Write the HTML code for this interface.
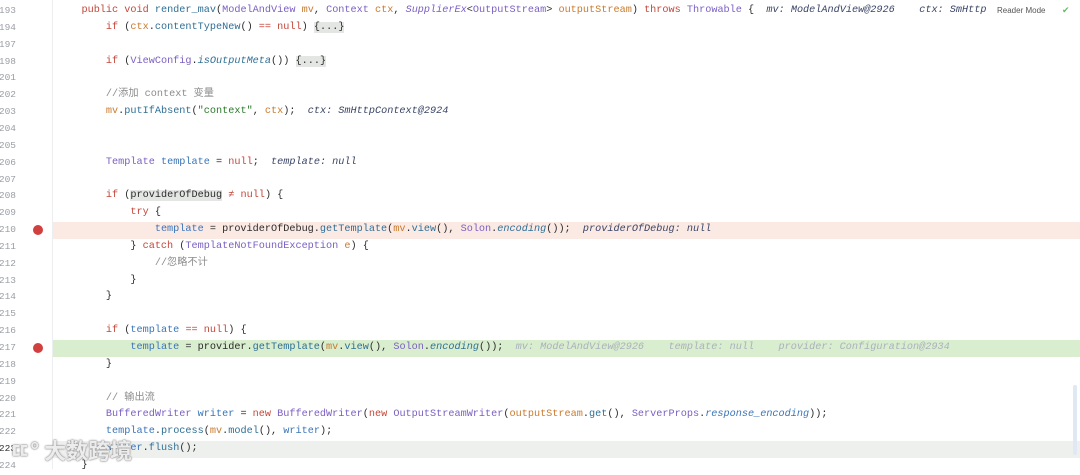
<!DOCTYPE html>
<html><head><meta charset="utf-8"><style>
body{margin:0;width:1080px;height:469px;background:#fff;overflow:hidden;position:relative;font-family:"Liberation Mono","Noto Sans CJK SC",monospace;font-size:10.2px;}
.row{position:absolute;left:0;width:1080px;height:16.85px;line-height:16.85px;white-space:pre;}
.ln{position:absolute;left:-4px;width:20px;text-align:right;color:#9a9ea4;font-size:9.5px;}
.c{position:absolute;left:57px;color:#2b2b2b;}
.k{color:#c4473a}.t{color:#7b5fc2}.f{color:#3a74b8}.m{color:#2f6f95}.p{color:#c97a2e}.i{font-style:italic}
.d{font-style:italic;color:#3a4566}.g{font-style:italic;color:#a9b2bd}.cm{color:#8c8c8c}.s{color:#2b7a2b}
.fold{background:#e4e6e4;}
.bp{position:absolute;left:33px;top:3px;width:10px;height:10px;border-radius:50%;background:#d23f3f;}
</style></head><body>
<div style="position:absolute;left:52px;top:0;width:1px;height:469px;background:#eceef0"></div>
<div class="row" style="top:3px"><span class="ln">193</span><span class="c">    <span class="k">public void</span> <span class="m">render_mav</span>(<span class="t">ModelAndView</span> <span class="p">mv</span>, <span class="t">Context</span> <span class="p">ctx</span>, <span class="t i">SupplierEx</span>&lt;<span class="t">OutputStream</span>&gt; <span class="p">outputStream</span>) <span class="k">throws</span> <span class="t">Throwable</span> {  <span class="d">mv: ModelAndView@2926    ctx: SmHttp</span></span><span style="position:absolute;left:997px;font-family:'Liberation Sans';font-size:8px;color:#555">Reader Mode</span><span style="position:absolute;left:1062px;color:#6b6;font-size:9px">✔</span></div>
<div class="row" style="top:19.85px"><span class="ln">194</span><span class="c">        <span class="k">if</span> (<span class="p">ctx</span>.<span class="m">contentTypeNew</span>() <span class="k">==</span> <span class="k">null</span>) <span class="fold">{...}</span></span></div>
<div class="row" style="top:36.7px"><span class="ln">197</span></div>
<div class="row" style="top:53.55px"><span class="ln">198</span><span class="c">        <span class="k">if</span> (<span class="t">ViewConfig</span>.<span class="m i">isOutputMeta</span>()) <span class="fold">{...}</span></span></div>
<div class="row" style="top:70.4px"><span class="ln">201</span></div>
<div class="row" style="top:87.25px"><span class="ln">202</span><span class="c">        <span class="cm">//添加 context 变量</span></span></div>
<div class="row" style="top:104.1px"><span class="ln">203</span><span class="c">        <span class="p">mv</span>.<span class="m">putIfAbsent</span>(<span class="s">"context"</span>, <span class="p">ctx</span>);  <span class="d">ctx: SmHttpContext@2924</span></span></div>
<div class="row" style="top:120.95px"><span class="ln">204</span></div>
<div class="row" style="top:137.8px"><span class="ln">205</span></div>
<div class="row" style="top:154.65px"><span class="ln">206</span><span class="c">        <span class="t">Template</span> <span class="f">template</span> = <span class="k">null</span>;  <span class="d">template: null</span></span></div>
<div class="row" style="top:171.5px"><span class="ln">207</span></div>
<div class="row" style="top:188.35px"><span class="ln">208</span><span class="c">        <span class="k">if</span> (<span class="fold">providerOfDebug</span> <span class="k">≠</span> <span class="k">null</span>) {</span></div>
<div class="row" style="top:205.2px"><span class="ln">209</span><span class="c">            <span class="k">try</span> {</span></div>
<div class="row" style="top:222.05px"><span class="ln">210</span><span class="bp"></span><div style="position:absolute;left:53px;top:0;right:0;height:100%;background:#fbe9e4"></div><span class="c">                <span class="f">template</span> = providerOfDebug.<span class="m">getTemplate</span>(<span class="p">mv</span>.<span class="m">view</span>(), <span class="t">Solon</span>.<span class="m i">encoding</span>());  <span class="d">providerOfDebug: null</span></span></div>
<div class="row" style="top:238.9px"><span class="ln">211</span><span class="c">            } <span class="k">catch</span> (<span class="t">TemplateNotFoundException</span> <span class="p">e</span>) {</span></div>
<div class="row" style="top:255.75px"><span class="ln">212</span><span class="c">                <span class="cm">//忽略不计</span></span></div>
<div class="row" style="top:272.6px"><span class="ln">213</span><span class="c">            }</span></div>
<div class="row" style="top:289.45px"><span class="ln">214</span><span class="c">        }</span></div>
<div class="row" style="top:306.3px"><span class="ln">215</span></div>
<div class="row" style="top:323.15px"><span class="ln">216</span><span class="c">        <span class="k">if</span> (<span class="f">template</span> <span class="k">==</span> <span class="k">null</span>) {</span></div>
<div class="row" style="top:340px"><span class="ln">217</span><span class="bp"></span><div style="position:absolute;left:53px;top:0;right:0;height:100%;background:#d9edcf"></div><span class="c">            <span class="f">template</span> = provider.<span class="m">getTemplate</span>(<span class="p">mv</span>.<span class="m">view</span>(), <span class="t">Solon</span>.<span class="m i">encoding</span>());  <span class="g">mv: ModelAndView@2926    template: null    provider: Configuration@2934</span></span></div>
<div class="row" style="top:356.85px"><span class="ln">218</span><span class="c">        }</span></div>
<div class="row" style="top:373.7px"><span class="ln">219</span></div>
<div class="row" style="top:390.55px"><span class="ln">220</span><span class="c">        <span class="cm">// 输出流</span></span></div>
<div class="row" style="top:407.4px"><span class="ln">221</span><span class="c">        <span class="t">BufferedWriter</span> <span class="f">writer</span> = <span class="k">new</span> <span class="t">BufferedWriter</span>(<span class="k">new</span> <span class="t">OutputStreamWriter</span>(<span class="p">outputStream</span>.<span class="m">get</span>(), <span class="t">ServerProps</span>.<span class="f i">response_encoding</span>));</span></div>
<div class="row" style="top:424.25px"><span class="ln">222</span><span class="c">        <span class="f">template</span>.<span class="m">process</span>(<span class="p">mv</span>.<span class="m">model</span>(), <span class="f">writer</span>);</span></div>
<div class="row" style="top:441.1px"><span class="ln" style="color:#333">223</span><div style="position:absolute;left:53px;top:0;right:0;height:100%;background:#eef0ee"></div><span class="c">        <span class="f">writer</span>.<span class="m">flush</span>();</span></div>
<div class="row" style="top:457.95px"><span class="ln">224</span><span class="c">    }</span></div>
<div style="position:absolute;left:1073px;top:385px;width:4px;height:70px;background:#dfe8f3;border-radius:2px"></div>
<div style="position:absolute;left:10px;top:434px;font-family:'Noto Sans CJK SC',sans-serif;font-size:22px;font-weight:bold;color:rgba(255,255,255,0.85);text-shadow:0 0 2px #888,0 0 1px #666">ㄸ° 大数跨境</div>
</body></html>
